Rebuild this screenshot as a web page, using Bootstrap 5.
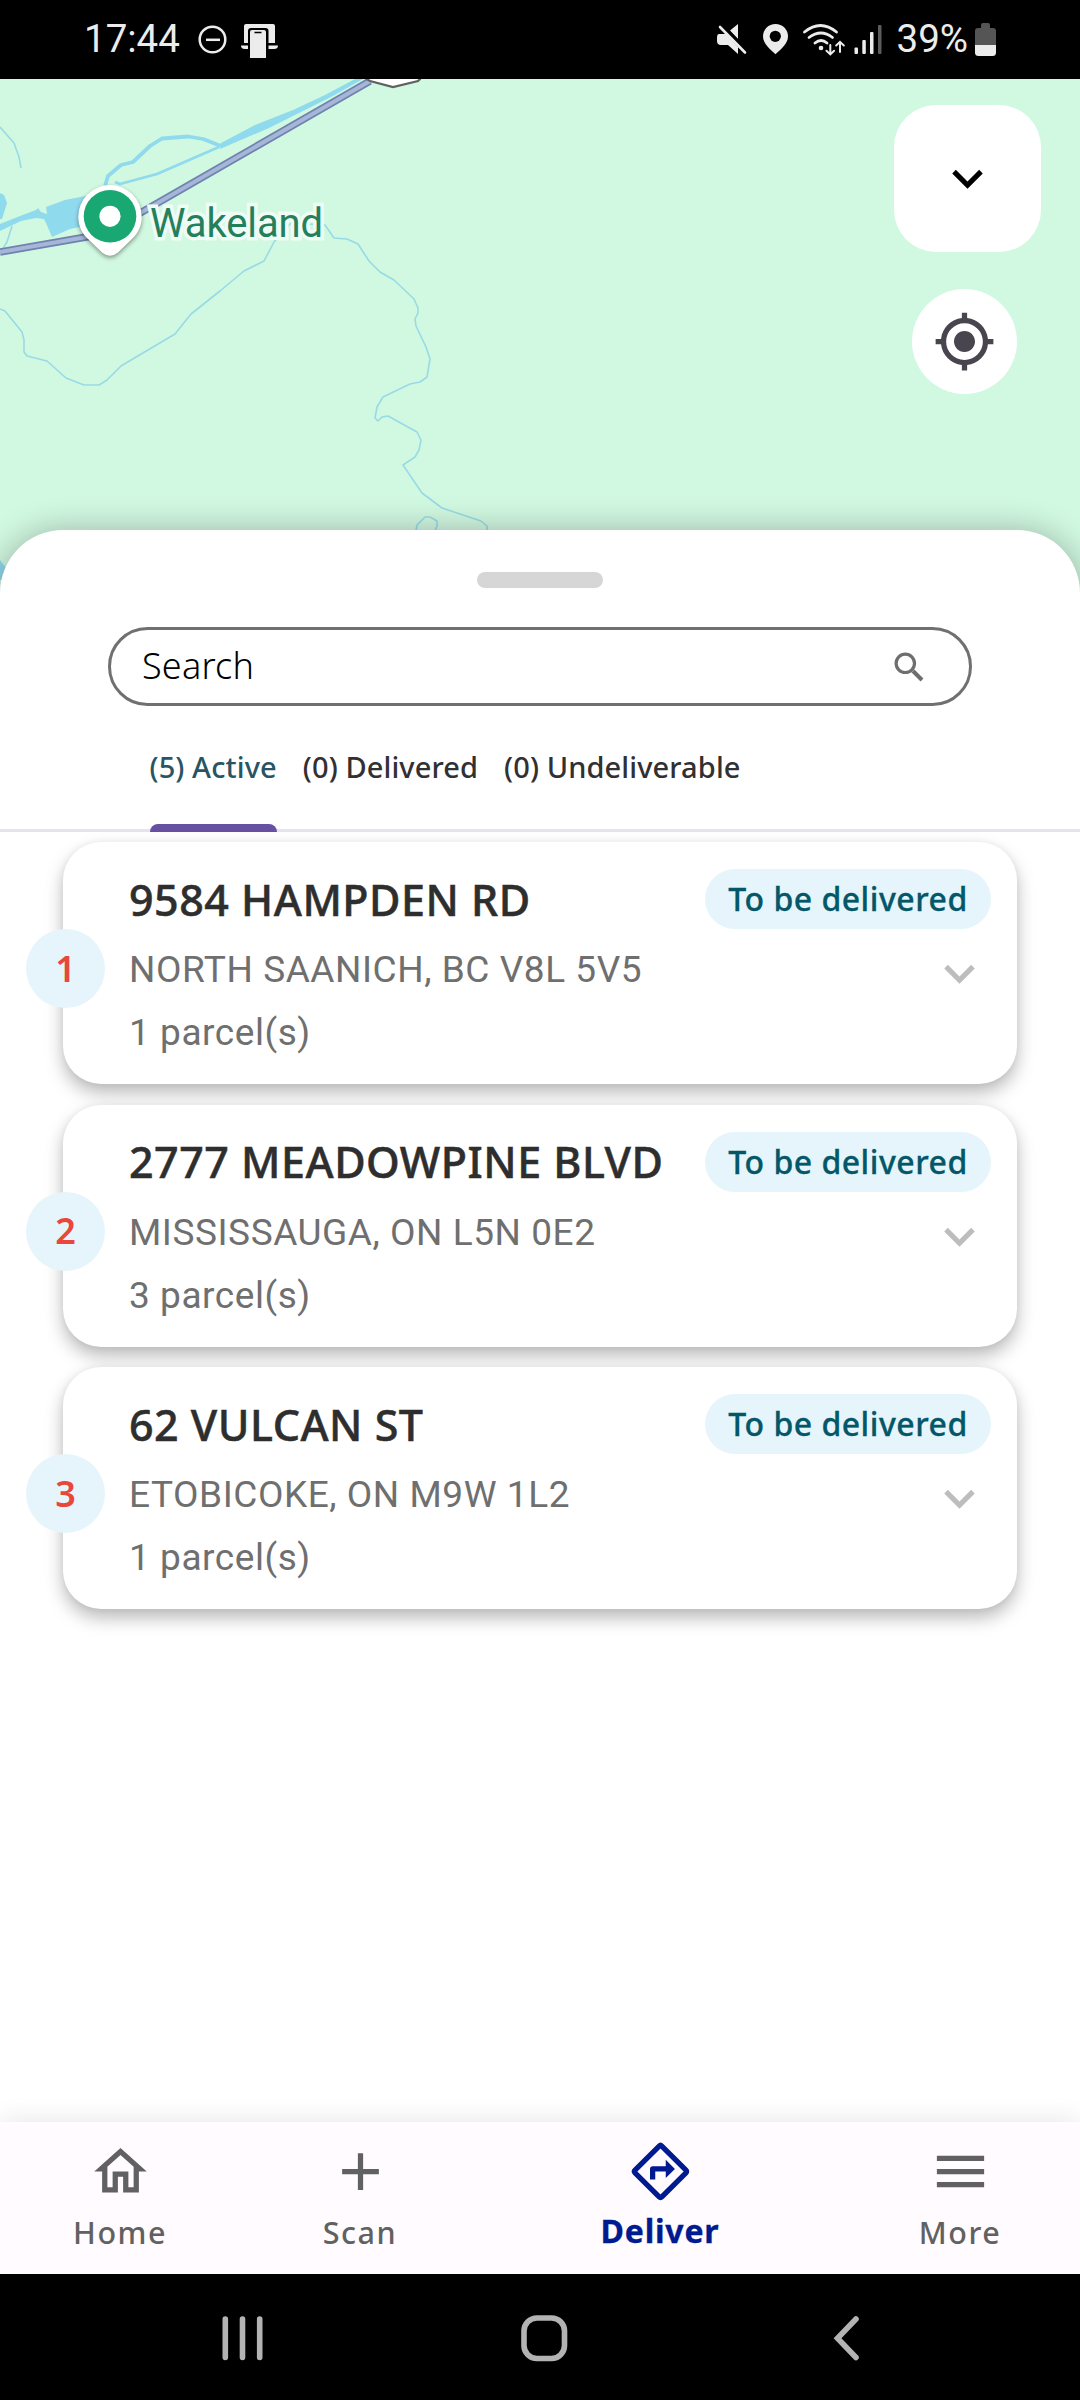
<!DOCTYPE html>
<html lang="en">
<head>
<meta charset="utf-8">
<meta name="viewport" content="width=device-width, initial-scale=1">
<title>Deliver</title>
<link rel="stylesheet" href="https://cdn.jsdelivr.net/npm/bootstrap@5.3.0/dist/css/bootstrap.min.css">
<style>
  body { font-family: "Noto Sans", "Open Sans", sans-serif; background: #fff; }
  .phone { width: 1080px; height: 2400px; }
  svg { display: block; flex: none; }
  .roboto { font-family: Roboto, sans-serif; }

  .status-bar { height: 79px; padding: 0 83px 0 84px; background: #000; color: #ececec; font-size: 38.5px; line-height: 79px; }
  .status-bar .txt { position: relative; top: -1px; }

  .map-area { height: 541px; background: #d1f8e1; }
  .map-pin-label { left: 150px; top: 121px; font-size: 40px; line-height: 48px; letter-spacing: -.1px; color: #23805d; -webkit-text-stroke: 7px #effcf5; paint-order: stroke fill; }
  .map-pin { filter: drop-shadow(0 2px 2px rgba(0,0,0,.4)); }
  .map-tools { top: 26px; right: 39px; width: 147px; }
  .layer-btn { width: 147px; height: 147px; border-radius: 42px; background: #fff; border: 0; padding: 0; }
  .locate-btn { width: 105px; height: 105px; margin: 37px 0 0 18px; border-radius: 50%; background: #fff; border: 0; padding: 0; }

  .sheet { margin-top: -90px; border-radius: 63px 63px 0 0; background: #fff; box-shadow: 0 4px 36px rgba(0,0,0,.32); }
  .grabber { width: 126px; height: 16px; margin-top: 42px; border-radius: 8px; background: #d6d6d6; }
  .search-pill { width: 864px; height: 79px; margin-top: 39px; padding: 0 44px 0 31px; border: 3px solid #707070; border-radius: 40px; }
  .search-pill input { font-size: 36px; font-weight: 300; line-height: 48px; color: #000; padding: 0 0 1px; letter-spacing: .2px; }
  .search-pill input::placeholder { color: #000; opacity: 1; }

  .status-tabs { height: 126px; padding-left: 149.5px; gap: 26px; border-bottom: 3px solid #e8e1ee; font-size: 29px; font-weight: 500; letter-spacing: .1px; }
  .status-tabs .nav-link { height: 126px; padding: 41px 0 0; line-height: 40px; color: #313033; white-space: nowrap; }
  .status-tabs .nav-link.active { color: #285463; position: relative; }
  .status-tabs .nav-link.active::after { content: ""; position: absolute; left: 0; right: 0; bottom: 0; height: 8px; border-radius: 8px 8px 0 0; background: #6750a0; }

  .stops { padding: 10px 63px 0; }
  .stop { height: 242px; margin-bottom: 20.5px; padding: 27px 26px 0 66px; border: 0; border-radius: 38px; background: #fff; box-shadow: 0 9px 18px rgba(0,0,0,.27), 0 0 7px rgba(0,0,0,.05); }
  .stop-head { height: 60px; }
  .stop-title { font-size: 43px; font-weight: 500; letter-spacing: .5px; line-height: 60px; padding-top: 1px; color: #2e2e2e; white-space: nowrap; -webkit-text-stroke: .5px #2e2e2e; }
  .stop-state { width: 286px; height: 60px; border-radius: 30px; background: #e6f5fb; color: #045768; font-size: 32px; font-weight: 500; letter-spacing: .5px; -webkit-text-stroke: .3px #045768; }
  .stop-lines { margin-top: 9px; font-size: 37px; line-height: 63px; letter-spacing: .55px; color: #6f6f6f; }
  .stop-no { left: -37px; top: 87px; width: 79px; height: 79px; background: #e6f5fb; color: #e9463c; font-size: 36px; font-weight: 600; }
  .stop-chev { margin: 14px 1px 0 0; }

  .app-nav { height: 152px; background: #fffbff; color: #616161; font-size: 30.5px; font-weight: 500; letter-spacing: 1.5px; box-shadow: 0 0 26px rgba(0,0,0,.11); }
  .app-nav a { width: 240px; color: inherit; padding-top: 18px; line-height: 42px; }
  .app-nav a.current { width: 360px; color: #001a90; font-size: 32px; font-weight: 700; letter-spacing: .8px; -webkit-text-stroke: .3px #001a90; }
  .app-nav svg { margin-bottom: 8px; }
  .app-nav a.current svg { margin-bottom: 7px; }
  .sys-nav { height: 126px; background: #000; padding: 2px 210px 0 217px; }
</style>
<script src="https://cdn.jsdelivr.net/npm/bootstrap@5.3.0/dist/js/bootstrap.bundle.min.js"></script>
</head>
<body>
<div class="phone d-flex flex-column overflow-hidden">

  <header class="status-bar roboto d-flex justify-content-between flex-shrink-0">
    <div class="d-flex">
      <span class="txt">17:44</span>
      <svg width="110" height="79" viewBox="180 0 110 79">
        <g fill="none" stroke="#ececec" stroke-width="2.5"><circle cx="212.500" cy="39.500" r="12.800"/><path d="M206 39.800h14"/></g>
        <path fill="#ececec" d="M244 43V26q0-2 2-2h27q2 0 2 2v17h-6.500V31q0-3-3-3h-14.500q-3 0-3 3v12zM241 45.500h7V49h-3q-4 0-4-3.500zM278 45.500h-9.500V49h5.500q4 0 4-3.500zM250 32q0-2 2-2h12q2 0 2 2v26h-16z"/>
        <path stroke="#000" stroke-width="1.500" d="M254.500 32.500h7"/>
      </svg>
    </div>
    <div class="d-flex">
      <svg width="186" height="79" viewBox="711 0 186 79">
        <g fill="#ececec">
          <path d="M719 34h7l12 13v7l-10-9h-7q-4 0-4-4v-3q0-4 2-4zM738 24v15l-8-8.500z"/>
          <path d="M775.500 24c-7 0-12.500 5.500-12.500 12.300 0 8 8 13.500 12.500 18 4.500-4.500 12.500-10 12.500-18C788 29.500 782.500 24 775.500 24z"/>
          <circle cx="821" cy="48" r="2.300"/>
          <rect x="854.500" y="47.500" width="3.500" height="6.500" rx="1"/>
          <rect x="862.300" y="40" width="3.500" height="14" rx="1"/>
          <rect x="870" y="32" width="3.500" height="22" rx="1"/>
          <rect x="878" y="25" width="3.500" height="29" rx="1" fill="#5c5c5c"/>
        </g>
        <circle cx="775.300" cy="36.300" r="5.600" fill="#000"/>
        <path stroke="#000" stroke-width="2.500" d="M722 25l25 25"/>
        <path stroke="#ececec" stroke-width="2.600" stroke-linecap="round" d="M720 27l25 25.500"/>
        <g fill="none" stroke="#ececec" stroke-width="2.800" stroke-linecap="round">
          <path d="M804.500 32q16-13 32 0M809 37.500q12-9 23.500 0M815 43q6-5 12 0"/>
          <path stroke-width="2" d="M830.300 45v9M826.500 50.800l3.800 3.600 3.800-3.600M840 52V42M836.200 45.500l3.800-3.700 3.800 3.700"/>
        </g>
      </svg>
      <span class="txt">39%</span>
      <svg class="ms-auto" width="29" height="79" viewBox="968 0 29 79">
        <path fill="#555" d="M981 25q0-2 2-2h5q2 0 2 2v3h3q3 0 3 3v14h-21V31q0-3 3-3h3z"/>
        <path fill="#ececec" d="M975 45h21v7.500q0 3.500-3.500 3.500h-14q-3.500 0-3.500-3.500z"/>
      </svg>
    </div>
  </header>

  <section class="map-area position-relative flex-shrink-0">
    <svg width="1080" height="541" viewBox="0 79 1080 541">
      <g fill="#90daee">
        <path d="M355 79L325 95 293 110 255 125 221 143 220 149 269 128 331 97 363 79z"/>
        <path d="M46 207L65 200 90 195V225L70 229 52 237 46 223 44 219 36 218 21 221 0 231V224L20 216 36 210 38 208 41 212 47 214z"/>
        <path d="M0 193l4 2 3 8-5 16H0zM0 560l6 8v12H0z"/>
      </g>
      <g fill="none" stroke="#90daee" stroke-linejoin="round">
        <path stroke-width="2.600" d="M219 147L157 174 120 184 115 182"/>
        <path stroke-width="3.800" d="M221 146L203 139 188 136.500 162 138.500 150 146 133 162 121 165 108 176 105 186"/>
      </g>
      <g fill="none" stroke="#98dbe5" stroke-width="1.600" stroke-linejoin="round">
        <path d="M0 127L14 143 19 157 21 168M12 226L7 242 2 250"/>
        <path d="M0 309L5 311 22 332 24 340V352L27 356 47 361 66 378 84 385H99L107 380 121 366 175 334 191 314 220 291 244 271 264 261 274 242 291 223 325 225 334 238 347 239 358 244 369 261 380 272 394 280 414 299 418 308V313L415 319 416 326 426 347 430 359 427 377 420 382 410 384 383 397 377 407 375 418 378 421 382 417 388 416 417 432 421 440 419 450 415 457 403 465 422 493 442 508 481 521 487 526V531M416 531L417 525 425 517 430 517 437 521V526L435 531"/>
      </g>
      <g fill="none" stroke="#6f83ae" stroke-width="7.500"><path d="M370 81L135 216M92 236L0 252"/></g>
      <g fill="none" stroke="#a5b6d8" stroke-width="4"><path d="M370 81L135 216M92 236L0 252"/></g>
      <path fill="#fff" stroke="#606060" stroke-width="2.200" d="M365 78l5 3 23 6 25-6 3-3z"/>
      <g class="map-pin">
        <path fill="#fff" d="M110 185a31.700 31.700 0 0 0-31.700 31.700c0 9 3.500 16 9 21.600l15 14.500q7.700 6 15.400 0l15-14.500c5.500-5.600 9-12.600 9-21.600A31.700 31.700 0 0 0 110 185z"/>
      </g>
      <circle cx="110" cy="216.300" r="26.300" fill="#1aa872"/>
      <circle cx="110" cy="216.300" r="10.600" fill="#fff"/>
    </svg>
    <div class="map-pin-label roboto position-absolute">Wakeland</div>
    <div class="map-tools position-absolute">
      <button class="layer-btn d-flex align-items-center justify-content-center" aria-label="Collapse">
        <svg width="61" height="61" viewBox="0 0 24 24"><path d="M7.410 8.590L12 13.170l4.590-4.580L18 10l-6 6-6-6z"/></svg>
      </button>
      <button class="locate-btn d-flex align-items-center justify-content-center" aria-label="My location">
        <svg width="63" height="63" viewBox="0 0 24 24" fill="#49454f"><path d="M12 8c-2.210 0-4 1.790-4 4s1.790 4 4 4 4-1.790 4-4-1.790-4-4-4zm8.940 3c-.46-4.170-3.770-7.480-7.940-7.940V1h-2v2.060C6.830 3.520 3.520 6.830 3.060 11H1v2h2.060c.46 4.170 3.770 7.480 7.940 7.940V23h2v-2.060c4.170-.46 7.480-3.770 7.940-7.940H23v-2h-2.060zM12 19c-3.870 0-7-3.130-7-7s3.130-7 7-7 7 3.130 7 7-3.130 7-7 7z"/></svg>
      </button>
    </div>
  </section>

  <main class="sheet position-relative flex-grow-1 d-flex flex-column align-items-center">
    <div class="grabber"></div>
    <label class="search-pill d-flex align-items-center">
      <input class="form-control border-0 bg-transparent shadow-none" type="text" placeholder="Search">
      <svg width="32" height="32" viewBox="0 0 32 32" fill="none" stroke="#6e6e6e"><circle cx="12.300" cy="12.300" r="9.200" stroke-width="3.200"/><path stroke-width="4" d="M20 20l9 9"/></svg>
    </label>
    <nav class="status-tabs nav flex-nowrap w-100">
      <a class="nav-link active">(5) Active</a>
      <a class="nav-link">(0) Delivered</a>
      <a class="nav-link">(0) Undeliverable</a>
    </nav>

    <div class="stops w-100">
      <article class="card stop">
        <div class="stop-head d-flex justify-content-between align-items-center">
          <div class="stop-title">9584 HAMPDEN RD</div>
          <div class="stop-state d-flex align-items-center justify-content-center">To be delivered</div>
        </div>
        <div class="d-flex justify-content-between">
          <div class="stop-lines roboto"><div>NORTH SAANICH, BC V8L 5V5</div><div>1 parcel(s)</div></div>
          <svg class="stop-chev" width="61" height="61" viewBox="0 0 24 24" fill="#bdbdbd"><path d="M7.410 8.590L12 13.170l4.590-4.580L18 10l-6 6-6-6z"/></svg>
        </div>
        <div class="stop-no rounded-circle position-absolute d-flex align-items-center justify-content-center">1</div>
      </article>
      <article class="card stop">
        <div class="stop-head d-flex justify-content-between align-items-center">
          <div class="stop-title">2777 MEADOWPINE BLVD</div>
          <div class="stop-state d-flex align-items-center justify-content-center">To be delivered</div>
        </div>
        <div class="d-flex justify-content-between">
          <div class="stop-lines roboto"><div>MISSISSAUGA, ON L5N 0E2</div><div>3 parcel(s)</div></div>
          <svg class="stop-chev" width="61" height="61" viewBox="0 0 24 24" fill="#bdbdbd"><path d="M7.410 8.590L12 13.170l4.590-4.580L18 10l-6 6-6-6z"/></svg>
        </div>
        <div class="stop-no rounded-circle position-absolute d-flex align-items-center justify-content-center">2</div>
      </article>
      <article class="card stop">
        <div class="stop-head d-flex justify-content-between align-items-center">
          <div class="stop-title">62 VULCAN ST</div>
          <div class="stop-state d-flex align-items-center justify-content-center">To be delivered</div>
        </div>
        <div class="d-flex justify-content-between">
          <div class="stop-lines roboto"><div>ETOBICOKE, ON M9W 1L2</div><div>1 parcel(s)</div></div>
          <svg class="stop-chev" width="61" height="61" viewBox="0 0 24 24" fill="#bdbdbd"><path d="M7.410 8.590L12 13.170l4.590-4.580L18 10l-6 6-6-6z"/></svg>
        </div>
        <div class="stop-no rounded-circle position-absolute d-flex align-items-center justify-content-center">3</div>
      </article>
    </div>
  </main>

  <nav class="app-nav d-flex position-relative flex-shrink-0">
    <a class="d-flex flex-column align-items-center text-decoration-none">
      <svg width="63" height="63" viewBox="0 0 24 24" fill="currentColor"><path d="M12 5.690l5 4.500V18h-2v-6H9v6H7v-7.810l5-4.500M12 3L2 12h3v8h6v-6h2v6h6v-8h3L12 3z"/></svg>
      <span>Home</span>
    </a>
    <a class="d-flex flex-column align-items-center text-decoration-none">
      <svg width="63" height="63" viewBox="0 0 24 24" fill="currentColor"><path d="M19 13h-6v6h-2v-6H5v-2h6V5h2v6h6v2z"/></svg>
      <span>Scan</span>
    </a>
    <a class="current d-flex flex-column align-items-center text-decoration-none">
      <svg width="63" height="63" viewBox="0 0 24 24" fill="currentColor"><path fill="none" stroke="currentColor" stroke-width="2" stroke-linejoin="round" d="M11.500 2.300q.5-.5 1 0l9.200 9.200q.5.500 0 1l-9.200 9.200q-.5.500-1 0L2.300 12.500q-.5-.5 0-1z"/><path d="M8 15h2v-3h4v2.500l3.500-3.500L14 7.500V10H9c-.55 0-1 .45-1 1v4z"/></svg>
      <span>Deliver</span>
    </a>
    <a class="d-flex flex-column align-items-center text-decoration-none">
      <svg width="63" height="63" viewBox="0 0 24 24" fill="currentColor"><path d="M3 18h18v-2H3v2zm0-5h18v-2H3v2zm0-7v2h18V6H3z"/></svg>
      <span>More</span>
    </a>
  </nav>

  <footer class="sys-nav d-flex justify-content-between align-items-center flex-shrink-0">
    <svg width="52" height="52" viewBox="0 0 52 52" stroke="#b3b3b3" stroke-width="5.600" stroke-linecap="round"><path d="M8.300 7v38.500M25.500 7v38.500M42.700 7v38.500"/></svg>
    <svg width="52" height="52" viewBox="0 0 52 52" fill="none" stroke="#b3b3b3" stroke-width="5.600"><rect x="6" y="6" width="40.500" height="40.500" rx="13"/></svg>
    <svg width="52" height="52" viewBox="0 0 52 52" fill="none" stroke="#b3b3b3" stroke-width="5.600" stroke-linecap="round"><path d="M38 7L19.500 26.200 38 45.500"/></svg>
  </footer>
</div>
</body>
</html>
